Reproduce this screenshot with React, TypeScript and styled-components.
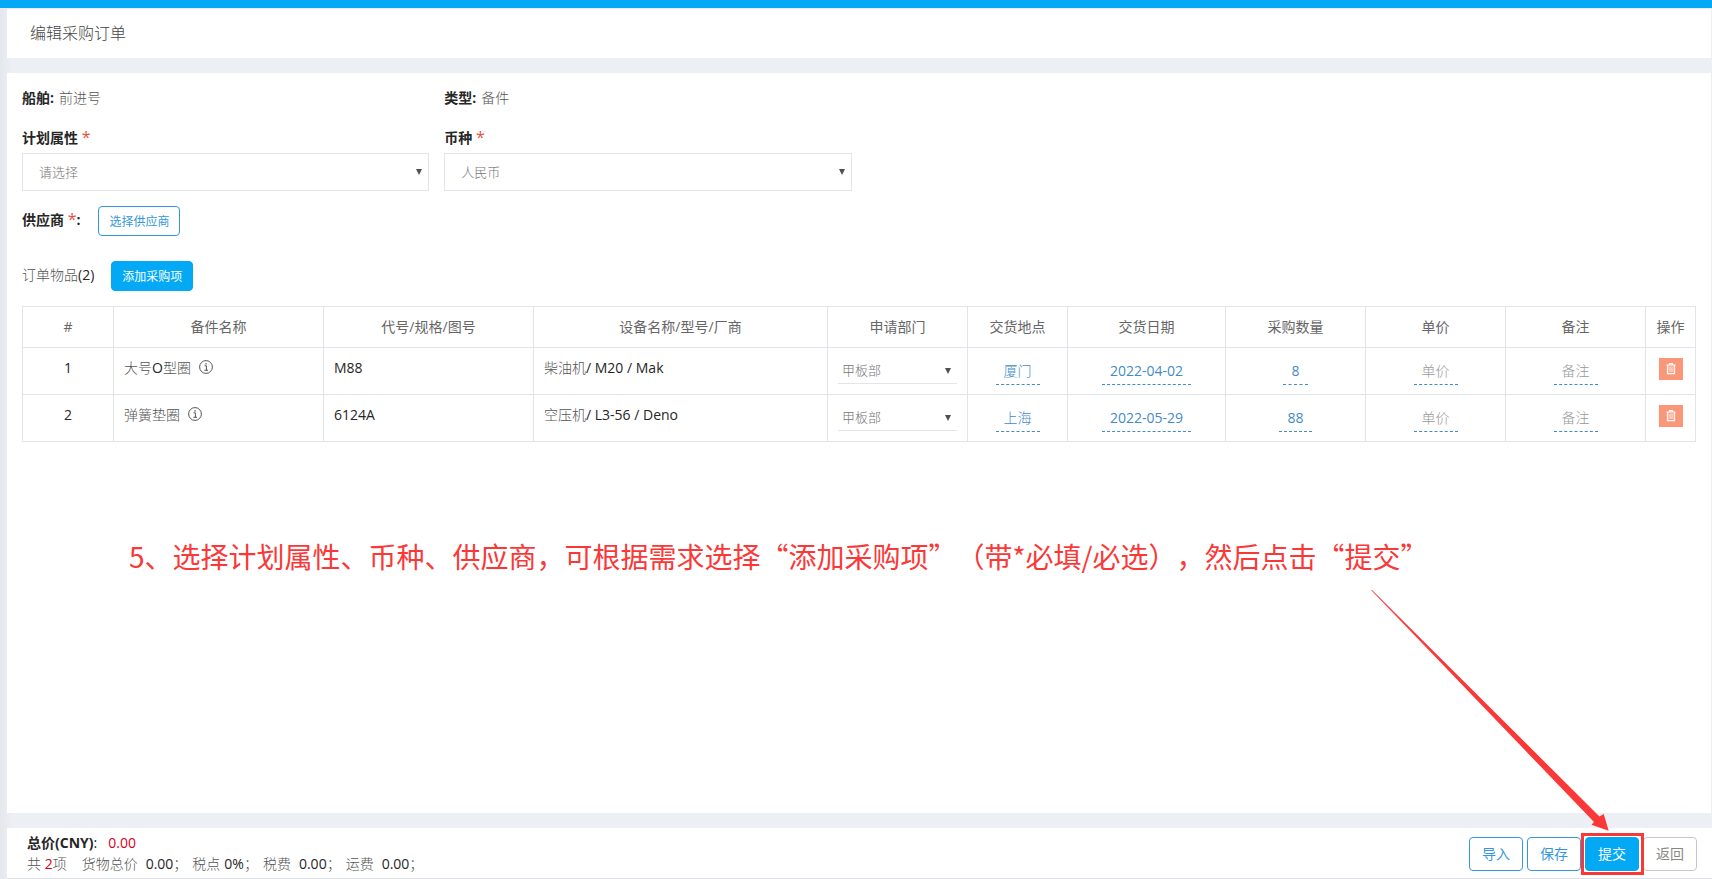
import React from "react";
import styled, { createGlobalStyle } from "styled-components";

const GlobalStyle = createGlobalStyle`
  *, *::before, *::after { box-sizing: border-box; }
  body {
    margin: 0;
    background: #ecf0f5;
    color: #262626;
    font-family: "Open Sans", "Noto Sans CJK SC", sans-serif;
    font-size: 14px;
    line-height: 20px;
  }
  button, select { font-family: inherit; }
`;

const blue = "#03a9f4";
const outline = "#3598dc";
const line = "#e1e5e9";
const alertRed = "#fa3838";

const Page = styled.div`
  display: flex;
  flex-direction: column;
  min-height: 100vh;
  padding-left: 7px;
  border-top: 8px solid ${blue};
  background: linear-gradient(to right, #e4e8ed, #ecf0f5 12px);
`;

const TitleBar = styled.header`
  height: 50px;
  margin: 0 1px 15px 0;
  padding: 0 23px;
  background: #fff;
  box-shadow: inset 0 2px 2px -1px #dfe6ea;
`;

const Title = styled.h1`
  margin: 0;
  font-size: 16px;
  font-weight: 300;
  line-height: 50px;
  color: #444;
`;

const Panel = styled.main`
  flex: 1;
  margin: 0 1px 15px 0;
  padding: 15px;
  background: #fff;
`;

const Grid = styled.div`
  display: grid;
  grid-template-columns: repeat(4, 1fr);
  column-gap: 15px;
  row-gap: 20px;
`;

const Field = styled.div`
  grid-column: ${(p: { $start: number }) => p.$start};
`;

const Fact = styled(Field)`
  display: flex;
  gap: 5px;
`;

const Label = styled.label`
  display: block;
  margin-bottom: 5px;
  font-weight: 700;
`;

const Strong = styled.span`
  font-weight: 700;
`;

const Cjk = styled.span`
  font-weight: 300;
  color: #555;
`;

const Required = styled.span`
  font-size: 16px;
  font-weight: 400;
  line-height: 1;
  color: #e8503f;
`;

const SelectBox = styled.div`
  position: relative;
  &::after {
    content: "";
    position: absolute;
    top: 50%;
    right: ${(p: { $inline?: boolean }) => (p.$inline ? 6 : 7)}px;
    margin-top: -3px;
    border: solid transparent;
    border-width: 6px 3px 0;
    border-top-color: #505050;
    pointer-events: none;
  }
`;

const Select = styled.select`
  display: block;
  appearance: none;
  width: 100%;
  height: ${(p: { $inline?: boolean }) => (p.$inline ? 26 : 38)}px;
  padding: ${(p) => (p.$inline ? "0 4px 2px" : "0 16px")};
  border: 1px solid ${line};
  border-width: ${(p) => (p.$inline ? "0 0 1px" : "1px")};
  border-radius: 0;
  background: #fff;
  color: #777;
  font-size: 13px;
  font-weight: 300;
`;

const ActionLine = styled.div`
  display: flex;
  gap: ${(p: { $gap: number }) => p.$gap}px;
  height: 30px;
  line-height: 28px;
`;

const SupplierLine = styled(ActionLine)`
  margin: 15px 0 25px;
`;

const SmallButton = styled.button`
  width: 82px;
  height: 30px;
  padding: 0;
  border: 1px solid ${(p: { $solid?: boolean }) => (p.$solid ? blue : outline)};
  border-radius: 4px;
  background: ${(p) => (p.$solid ? blue : "#fff")};
  color: ${(p) => (p.$solid ? "#fff" : outline)};
  font-size: 12px;
`;

const Table = styled.table`
  width: 100%;
  margin-top: 15px;
  border-collapse: collapse;
  table-layout: fixed;
`;

const Col = styled.col`
  width: ${(p: { $w: number }) => p.$w}px;
`;

const Th = styled.th`
  height: 41px;
  padding: 0;
  border: 1px solid ${line};
  font-weight: 400;
  color: #666;
`;

const Td = styled.td`
  height: 47px;
  padding: 10px 10px 0;
  border: 1px solid ${line};
  vertical-align: top;
  text-align: ${(p: { $center?: boolean }) => (p.$center ? "center" : "left")};
`;

const NameCell = styled.div`
  display: flex;
  gap: 8px;
`;

const InfoSvg = styled.svg`
  width: 14px;
  height: 14px;
  margin-top: 2px;
`;

const Editable = styled.a`
  display: inline-block;
  margin-top: 3px;
  padding: 0 8px 3px;
  border-bottom: 1px dashed #428bca;
  color: ${(p: { $empty?: boolean; $light?: boolean }) => (p.$empty ? "#999" : "#428bca")};
  font-weight: ${(p) => (p.$empty || p.$light ? 300 : 400)};
  text-decoration: none;
`;

const DeleteCell = styled(Td)`
  padding: 10px 0 0;
`;

const DeleteButton = styled.button`
  display: inline-flex;
  align-items: center;
  justify-content: center;
  width: 24px;
  height: 22px;
  padding: 0;
  border: 0;
  background: #fc9679;
`;

const Note = styled.p`
  margin: 94px 0 0 107px;
  color: ${alertRed};
  font-family: "Noto Sans CJK SC", sans-serif;
  font-size: 28px;
  line-height: 40px;
  text-spacing-trim: space-all;
  white-space: nowrap;
`;

const Footer = styled.footer`
  display: flex;
  justify-content: space-between;
  height: 51px;
  padding: 4px 15px 0 20px;
  border-bottom: 1px solid #dcdfe3;
  background: #fff;
`;

const Totals = styled.div`
  line-height: 21px;
`;

const TotalLine = styled.div`
  display: flex;
  gap: ${(p: { $gap: number }) => p.$gap}px;
`;

const Count = styled.span`
  margin-right: 10px;
`;

const Amount = styled.span`
  display: flex;
  gap: ${(p: { $gap: number }) => p.$gap}px;
`;

const Red = styled.span`
  color: #d9001b;
`;

const Buttons = styled.div`
  display: flex;
  gap: 4px;
  padding-top: 5px;
`;

const tones = {
  outline: { border: outline, bg: "#fff", text: outline },
  solid: { border: blue, bg: blue, text: "#fff" },
  plain: { border: "#c8c8c8", bg: "#fff", text: "#888" },
};

const FooterButton = styled.button`
  width: 54px;
  height: 34px;
  padding: 0 0 2px;
  border: 1px solid ${(p: { $tone: keyof typeof tones }) => tones[p.$tone].border};
  border-radius: 4px;
  background: ${(p) => tones[p.$tone].bg};
  color: ${(p) => tones[p.$tone].text};
  font-size: 14px;
`;

const Highlight = styled.div`
  position: relative;
  height: 34px;
  &::after {
    content: "";
    position: absolute;
    inset: -4px -5px -4px -4px;
    border: 3px solid ${alertRed};
    pointer-events: none;
  }
`;

const Arrow = styled.svg`
  position: absolute;
  right: 28px;
  bottom: 40px;
  width: 240px;
  height: 241px;
  pointer-events: none;
`;

const InfoIcon = () => (
  <InfoSvg viewBox="0 0 14 14" fill="none" stroke="#444" aria-label="详情">
    <circle cx="7" cy="7" r="6.4" strokeWidth="0.9" />
    <path d="M5.5 5.8H7.4V10.2M5.4 10.3H9" strokeWidth="0.9" />
    <path d="M6.4 3.2H7.7V4.4H6.4Z" fill="#444" stroke="none" />
  </InfoSvg>
);

const TrashIcon = () => (
  <svg width="10" height="12" viewBox="0 0 10 12" fill="none" stroke="#fff">
    <path d="M0.5 2H9.5M3.5 1.5V0.6H6.5V1.5" strokeWidth="1.1" />
    <path d="M1.6 2V10.6H8.4V2" strokeWidth="1.4" />
    <path d="M4 3.5V9M6 3.5V9" strokeWidth="0.9" />
  </svg>
);

const widths = [91, 210, 210, 294, 140, 100, 158, 140, 140, 140, 50];
const heads = [
  "#", "备件名称", "代号/规格/图号", "设备名称/型号/厂商", "申请部门", "交货地点",
  "交货日期", "采购数量", "单价", "备注", "操作",
];
const rows = [
  { name: <><Cjk>大号</Cjk>O<Cjk>型圈</Cjk></>, code: "M88", device: "柴油机", model: "/ M20 / Mak", place: "厦门", date: "2022-04-02", qty: "8" },
  { name: <Cjk>弹簧垫圈</Cjk>, code: "6124A", device: "空压机", model: "/ L3-56 / Deno", place: "上海", date: "2022-05-29", qty: "88" },
];
const amounts = [
  { label: "货物总价", value: "0.00", gap: 8 },
  { label: "税点", value: "0%", gap: 4 },
  { label: "税费", value: "0.00", gap: 8 },
  { label: "运费", value: "0.00", gap: 8 },
];

export default function App() {
  return (
    <Page lang="zh-CN">
      <GlobalStyle />
      <TitleBar>
        <Title>编辑采购订单</Title>
      </TitleBar>
      <Panel>
        <Grid>
          <Fact $start={1}><Strong>船舶:</Strong><Cjk>前进号</Cjk></Fact>
          <Fact $start={2}><Strong>类型:</Strong><Cjk>备件</Cjk></Fact>
          <Field $start={1}>
            <Label htmlFor="plan">计划属性 <Required>*</Required></Label>
            <SelectBox>
              <Select id="plan"><option>请选择</option></Select>
            </SelectBox>
          </Field>
          <Field $start={2}>
            <Label htmlFor="currency">币种 <Required>*</Required></Label>
            <SelectBox>
              <Select id="currency"><option>人民币</option></Select>
            </SelectBox>
          </Field>
        </Grid>
        <SupplierLine $gap={18}>
          <Strong>供应商 <Required>*</Required>:</Strong>
          <SmallButton type="button">选择供应商</SmallButton>
        </SupplierLine>
        <ActionLine $gap={17}>
          <span><Cjk>订单物品</Cjk>(2)</span>
          <SmallButton type="button" $solid>添加采购项</SmallButton>
        </ActionLine>
        <Table>
          <colgroup>{widths.map((w, i) => <Col key={i} $w={w} />)}</colgroup>
          <thead>
            <tr>{heads.map((h) => <Th key={h} scope="col">{h}</Th>)}</tr>
          </thead>
          <tbody>
            {rows.map((r, i) => (
              <tr key={r.code}>
                <Td $center>{i + 1}</Td>
                <Td><NameCell><span>{r.name}</span><InfoIcon /></NameCell></Td>
                <Td>{r.code}</Td>
                <Td><Cjk>{r.device}</Cjk>{r.model}</Td>
                <Td>
                  <SelectBox $inline>
                    <Select $inline aria-label="申请部门"><option>甲板部</option></Select>
                  </SelectBox>
                </Td>
                <Td $center><Editable href="#" $light>{r.place}</Editable></Td>
                <Td $center><Editable href="#">{r.date}</Editable></Td>
                <Td $center><Editable href="#">{r.qty}</Editable></Td>
                <Td $center><Editable href="#" $empty>单价</Editable></Td>
                <Td $center><Editable href="#" $empty>备注</Editable></Td>
                <DeleteCell $center>
                  <DeleteButton type="button" aria-label="删除"><TrashIcon /></DeleteButton>
                </DeleteCell>
              </tr>
            ))}
          </tbody>
        </Table>
        <Note>5、选择计划属性、币种、供应商，可根据需求选择“添加采购项”（带*必填/必选），然后点击“提交”</Note>
      </Panel>
      <Footer>
        <Totals>
          <TotalLine $gap={11}>
            <span><Strong>总价(CNY)</Strong>:</span>
            <Red>0.00</Red>
          </TotalLine>
          <TotalLine $gap={5}>
            <Count><Cjk>共</Cjk> <Red>2</Red><Cjk>项</Cjk></Count>
            {amounts.map((a) => (
              <Amount key={a.label} $gap={a.gap}>
                <Cjk>{a.label}</Cjk>
                <span>{a.value}<Cjk>；</Cjk></span>
              </Amount>
            ))}
          </TotalLine>
        </Totals>
        <Buttons>
          <FooterButton type="button" $tone="outline">导入</FooterButton>
          <FooterButton type="button" $tone="outline">保存</FooterButton>
          <Highlight>
            <FooterButton type="button" $tone="solid">提交</FooterButton>
            <Arrow viewBox="0 0 240 241">
              <path d="M0 0L1 0L228.5 226.5L232.7 224L237.7 240.7L220.5 234.7L223 232Z" fill={alertRed} />
            </Arrow>
          </Highlight>
          <FooterButton type="button" $tone="plain">返回</FooterButton>
        </Buttons>
      </Footer>
    </Page>
  );
}
